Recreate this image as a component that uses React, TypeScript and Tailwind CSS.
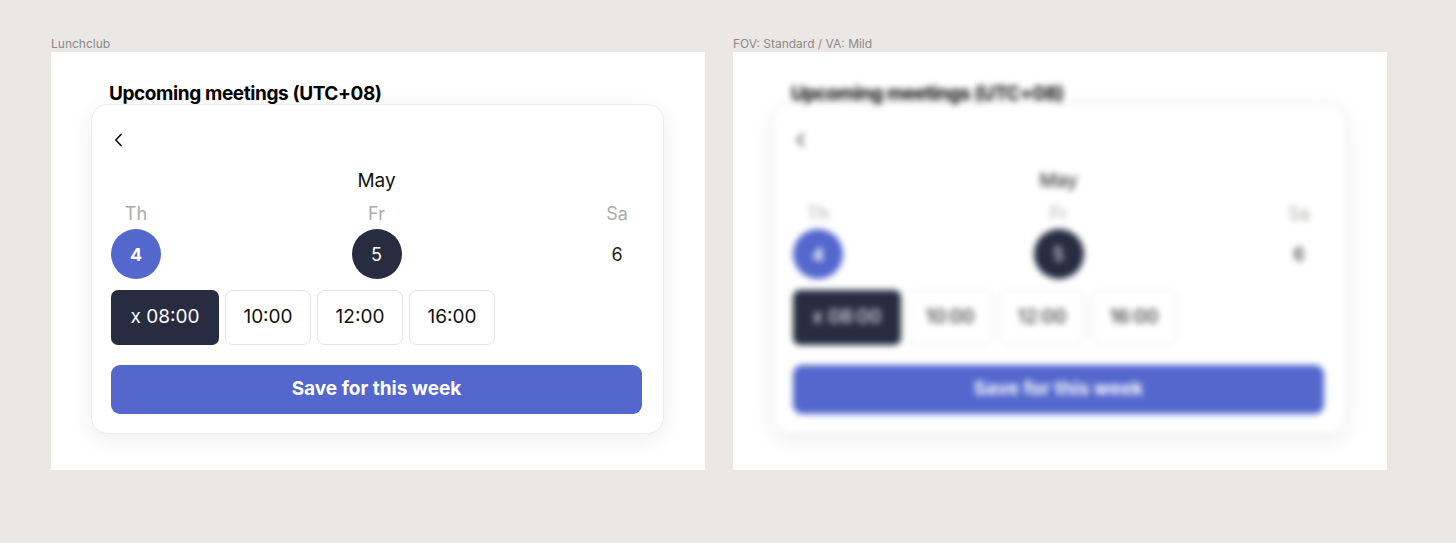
import React from "react";

const times = ["10:00", "12:00", "16:00"];

const Card = (): JSX.Element => {
  return (
    <div className="pt-[32px] pl-[40px]">
      <h2 className="pl-[18px] text-[19px] leading-[20px] font-bold text-black tracking-[-0.4px]">
        Upcoming meetings (UTC+08)
      </h2>

      <div className="w-[573px] rounded-[16px] border border-[#ececec] bg-white pt-[20px] pb-[19px] pl-[19px] pr-[21px] shadow-[0_6px_22px_rgba(0,0,0,0.07)]">
        {/* Back */}
        <div className="flex h-[30px] items-center pl-[2px]">
          <svg width="12" height="16" viewBox="0 0 12 16" fill="none">
            <path d="M8 2.5L2.8 8L8 13.5" stroke="#111" strokeWidth="1.7" strokeLinecap="round" strokeLinejoin="round" />
          </svg>
        </div>

        <div className="mt-[14px] text-center text-[19px] leading-[24px] text-[#111]">May</div>

        {/* Days */}
        <div className="mt-[9px] flex justify-between">
          <div className="flex w-[50px] flex-col items-center">
            <span className="text-[18px] leading-[24px] text-[#a9aea6]">Th</span>
            <span className="mt-[3px] flex h-[50px] w-[50px] items-center justify-center rounded-full bg-[#5367cd] text-[18px] font-bold text-white">
              4
            </span>
          </div>
          <div className="flex w-[50px] flex-col items-center">
            <span className="text-[18px] leading-[24px] text-[#a9aea6]">Fr</span>
            <span className="mt-[3px] flex h-[50px] w-[50px] items-center justify-center rounded-full bg-[#272c41] text-[18px] text-white">
              5
            </span>
          </div>
          <div className="flex w-[50px] flex-col items-center">
            <span className="text-[18px] leading-[24px] text-[#a9aea6]">Sa</span>
            <span className="mt-[3px] flex h-[50px] w-[50px] items-center justify-center text-[18px] text-[#222]">
              6
            </span>
          </div>
        </div>

        {/* Times */}
        <div className="mt-[11px] flex gap-[6px]">
          <button className="h-[55px] w-[108px] rounded-[7px] bg-[#272c41] text-[19px] text-white">
            x 08:00
          </button>
          {times.map((t) => (
            <button
              key={t}
              className="h-[55px] w-[86px] rounded-[8px] border border-[#e4e4e4] bg-white text-[19px] text-[#111]"
            >
              {t}
            </button>
          ))}
        </div>

        <button className="mt-[20px] h-[49px] w-full rounded-[9px] bg-[#5367cd] text-[19px] font-bold text-white">
          Save for this week
        </button>
      </div>
    </div>
  );
};

const Panel = ({ label, blur }: { label: string; blur?: boolean }): JSX.Element => {
  return (
    <div className="flex flex-col">
      <div className="h-[16px] text-[12px] leading-[16px] text-[#8c8a88]">{label}</div>
      <div className="h-[418px] w-[654px] overflow-hidden bg-white">
        <div className={blur ? "blur-[3px]" : ""}>
          <Card />
        </div>
      </div>
    </div>
  );
};

export default function App(): JSX.Element {
  return (
    <div className="h-[543px] w-[1456px] bg-[#ebe7e5] font-['Inter',sans-serif]">
      <div className="flex gap-[28px] pl-[51px] pt-[36px]">
        <Panel label="Lunchclub" />
        <Panel label="FOV: Standard / VA: Mild" blur />
      </div>
    </div>
  );
}
